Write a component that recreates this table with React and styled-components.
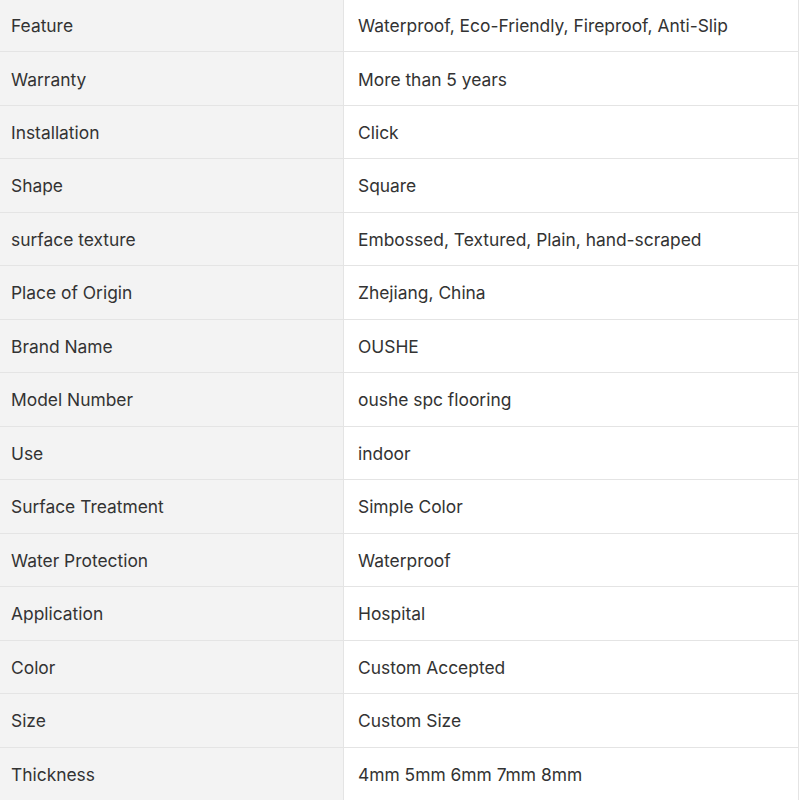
import React from "react";
import styled, { createGlobalStyle } from "styled-components";

const Global = createGlobalStyle`
  html, body { margin: 0; padding: 0; background: #ffffff; }
  body { font-family: Inter, "Noto Sans", sans-serif; }
`;

const Table = styled.div`
  display: grid;
  grid-template-columns: 344px 455px;
  margin-top: -1px;
  width: 799px;
`;

const Cell = styled.div`
  box-sizing: border-box;
  height: 53.47px;
  display: flex;
  align-items: center;
  padding-left: ${(p) => (p.$label ? "11px" : "14px")};
  padding-top: 1px;
  background: ${(p) => (p.$label ? "#f3f3f3" : "#ffffff")};
  border-bottom: 1px solid #e4e4e4;
  border-right: 1px solid #e4e4e4;
  color: #333333;
  font-size: 17.4px;
  line-height: 1;
  white-space: nowrap;
`;

const rows = [
  ["Feature", "Waterproof, Eco-Friendly, Fireproof, Anti-Slip"],
  ["Warranty", "More than 5 years"],
  ["Installation", "Click"],
  ["Shape", "Square"],
  ["surface texture", "Embossed, Textured, Plain, hand-scraped"],
  ["Place of Origin", "Zhejiang, China"],
  ["Brand Name", "OUSHE"],
  ["Model Number", "oushe spc flooring"],
  ["Use", "indoor"],
  ["Surface Treatment", "Simple Color"],
  ["Water Protection", "Waterproof"],
  ["Application", "Hospital"],
  ["Color", "Custom Accepted"],
  ["Size", "Custom Size"],
  ["Thickness", "4mm 5mm 6mm 7mm 8mm"],
];

export default function App() {
  return (
    <>
      <Global />
      <Table>
        {rows.map(([k, v]) => (
          <React.Fragment key={k}>
            <Cell $label>{k}</Cell>
            <Cell>{v}</Cell>
          </React.Fragment>
        ))}
      </Table>
    </>
  );
}
